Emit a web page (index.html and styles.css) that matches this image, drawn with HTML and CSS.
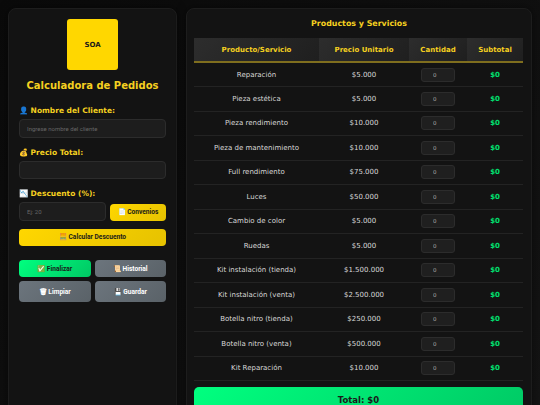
FILE: index.html
```html
<!DOCTYPE html>
<html lang="es">
<head>
<meta charset="utf-8">
<title>Calculadora de Pedidos</title>
<link rel="stylesheet" href="styles.css">
</head>
<body>
<div class="app">
  <aside class="panel side">
    <div class="logo">SOA</div>
    <h1 class="title">Calculadora de Pedidos</h1>
    <label class="label"><span class="emoji">👤</span> Nombre del Cliente:</label>
    <input class="field" type="text" placeholder="Ingrese nombre del cliente">
    <label class="label"><span class="emoji">💰</span> Precio Total:</label>
    <input class="field" type="text">
    <label class="label"><span class="emoji">📉</span> Descuento (%):</label>
    <div class="discount">
      <input class="field grow" type="text" placeholder="Ej: 20">
      <button class="btn gold small">📄 Convenios</button>
    </div>
    <button class="btn gold wide">🧮 Calcular Descuento</button>
    <div class="actions">
      <button class="btn green">✅ Finalizar</button>
      <button class="btn gray">📜 Historial</button>
      <button class="btn gray tall">🗑 Limpiar</button>
      <button class="btn gray tall">💾 Guardar</button>
    </div>
  </aside>
  <main class="panel content">
    <h2 class="heading">Productos y Servicios</h2>
    <table class="table">
      <thead>
        <tr><th class="c1">Producto/Servicio</th><th class="c2">Precio Unitario</th><th class="c3">Cantidad</th><th class="c4">Subtotal</th></tr>
      </thead>
      <tbody>
        <tr><td>Reparación</td><td>$5.000</td><td><input class="qty" value="0"></td><td class="sub">$0</td></tr>
        <tr><td>Pieza estética</td><td>$5.000</td><td><input class="qty" value="0"></td><td class="sub">$0</td></tr>
        <tr><td>Pieza rendimiento</td><td>$10.000</td><td><input class="qty" value="0"></td><td class="sub">$0</td></tr>
        <tr><td>Pieza de mantenimiento</td><td>$10.000</td><td><input class="qty" value="0"></td><td class="sub">$0</td></tr>
        <tr><td>Full rendimiento</td><td>$75.000</td><td><input class="qty" value="0"></td><td class="sub">$0</td></tr>
        <tr><td>Luces</td><td>$50.000</td><td><input class="qty" value="0"></td><td class="sub">$0</td></tr>
        <tr><td>Cambio de color</td><td>$5.000</td><td><input class="qty" value="0"></td><td class="sub">$0</td></tr>
        <tr><td>Ruedas</td><td>$5.000</td><td><input class="qty" value="0"></td><td class="sub">$0</td></tr>
        <tr><td>Kit instalación (tienda)</td><td>$1.500.000</td><td><input class="qty" value="0"></td><td class="sub">$0</td></tr>
        <tr><td>Kit instalación (venta)</td><td>$2.500.000</td><td><input class="qty" value="0"></td><td class="sub">$0</td></tr>
        <tr><td>Botella nitro (tienda)</td><td>$250.000</td><td><input class="qty" value="0"></td><td class="sub">$0</td></tr>
        <tr><td>Botella nitro (venta)</td><td>$500.000</td><td><input class="qty" value="0"></td><td class="sub">$0</td></tr>
        <tr><td>Kit Reparación</td><td>$10.000</td><td><input class="qty" value="0"></td><td class="sub">$0</td></tr>
      </tbody>
    </table>
    <div class="total">Total: $0</div>
  </main>
</div>
</body>
</html>
```

FILE: styles.css
```css
* { box-sizing: border-box; }
html, body { height: 100%; }
body {
  margin: 0;
  overflow: hidden;
  background: linear-gradient(135deg, #0a0a0a, #141414);
  font-family: "DejaVu Sans", sans-serif;
  color: #e0e0e0;
}
.app { display: flex; gap: 9px; padding: 8px 8px 0; height: 405px; overflow: hidden; }
.panel {
  height: 460px;
  background: #131313;
  border: 1px solid #1d1d1d;
  border-radius: 8px;
  box-shadow: 0 0 10px rgba(0,0,0,.5);
}
.side { width: 169px; flex: none; padding: 10px; }
.content { flex: 1; padding: 9px 7px; min-width: 0; }
.logo {
  width: 51px; height: 51px; margin: 0 auto;
  display: flex; align-items: center; justify-content: center;
  background: #ffd700; border-radius: 3px;
  color: #1a1a1a; font-size: 7px; font-weight: 700;
}
.title { margin: 9px 0 12px; text-align: center; color: #f5d020; font-size: 10px; line-height: 14px; font-weight: 700; white-space: nowrap; }
.label { display: block; margin: 0 0 3px; padding-top: 1px; color: #f5d020; font-size: 7.5px; line-height: 10px; font-weight: 700; }
.emoji { font-size: 7.5px; }
.field {
  display: block; width: 100%; height: 18.5px; margin-bottom: 9px; padding: 0 7px;
  background: #1d1d1d; border: 1px solid #2c2c2c; border-radius: 4px;
  color: #e0e0e0; font-family: "Roboto", sans-serif; font-size: 6px; outline: none;
}
.field::placeholder { color: #666; }
.discount { display: flex; gap: 4.5px; margin-bottom: 8px; }
.discount .field { margin: 0; }
.grow { flex: 1; min-width: 0; }
.btn { border: 0; border-radius: 4px; font-family: "Roboto", sans-serif; font-size: 6.6px; font-weight: 700; padding: 0; white-space: nowrap; }
.gold { background: linear-gradient(135deg, #ffd700, #e6c200); color: #1a1a1a; }
.small { width: 56px; height: 17px; flex: none; align-self: flex-end; }
.wide { display: block; width: 100%; height: 17.5px; }
.actions { display: grid; grid-template-columns: 71.5px 71.5px; gap: 4px; margin-top: 14px; }
.actions .btn { height: 17px; }
.actions .tall { height: 21px; }
.green { background: linear-gradient(135deg, #00ff7f, #00c864); color: #1a1a1a; }
.gray { background: linear-gradient(135deg, #6c757d, #5a6268); color: #fff; }
.heading { margin: 0 0 9px; text-align: center; color: #f5d020; font-size: 7.9px; line-height: 11px; font-weight: 700; }
.table { width: 329px; border-collapse: collapse; table-layout: fixed; font-size: 7px; }
.c1 { width: 125px; }
.c2 { width: 90px; }
.c3 { width: 58px; }
.c4 { width: 56px; }
th {
  height: 24px; background: linear-gradient(135deg, #2d2d2d, #1f1f1f);
  border-bottom: 2px solid #7f6e1e; color: #f5d020; font-size: 7px; font-weight: 700;
}
td { height: 24.5px; padding: 0; text-align: center; border-bottom: 1px solid #232323; color: #d8d8d8; }
.qty {
  display: block; width: 34px; height: 14px; margin: 0 auto; padding: 0 0 0 11px;
  background: #1f1f1f; border: 1px solid #2c2c2c; border-radius: 3px;
  color: #aaa; font-family: "DejaVu Sans", sans-serif; font-size: 5.5px; text-align: left; outline: none;
}
.sub { color: #00e070; font-weight: 700; }
.total {
  width: 329px; height: 40px; margin-top: 6px; padding-top: 6px; text-align: center;
  background: linear-gradient(135deg, #00ff7f, #00c864); border-radius: 5px;
  color: #1a1a1a; font-size: 8.5px; line-height: 14px; font-weight: 700;
}
```
